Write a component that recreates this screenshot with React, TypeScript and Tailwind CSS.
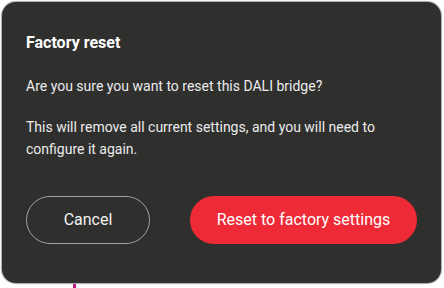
import React from "react";

const ResetDialog = () => {
  return (
    <div className="w-[439px] h-[281px] bg-[#2f2f2e] rounded-[14px] shadow-[0_0_1px_1px_rgba(0,0,0,0.35)] px-6 pt-[31px] flex flex-col">
      <h1 className="text-[16px] leading-[20px] font-bold text-white">Factory reset</h1>
      <p className="mt-[22px] text-[14px] leading-[22px] text-[#ececec]">
        Are you sure you want to reset this DALI bridge?
      </p>
      <p className="mt-[19px] text-[14px] leading-[22px] text-[#ececec]">
        This will remove all current settings, and you will need to configure it again.
      </p>
      <div className="mt-[36px] flex gap-10">
        <button className="w-[124px] h-12 rounded-full border border-[#a0a0a0] text-[16px] text-[#f2f2f2]">
          Cancel
        </button>
        <button className="flex-1 h-12 rounded-full bg-[#ee2a36] text-[16px] text-white">
          Reset to factory settings
        </button>
      </div>
    </div>
  );
};

export default function App() {
  return (
    <div className="w-[444px] h-[288px] bg-white p-[2px] font-['Roboto',sans-serif]">
      <ResetDialog />
      {/* little pink mark peeking out under the dialog */}
      <div className="ml-[71px] mt-[1px] w-[3px] h-[4px] bg-[#c0187a]" />
    </div>
  );
}
